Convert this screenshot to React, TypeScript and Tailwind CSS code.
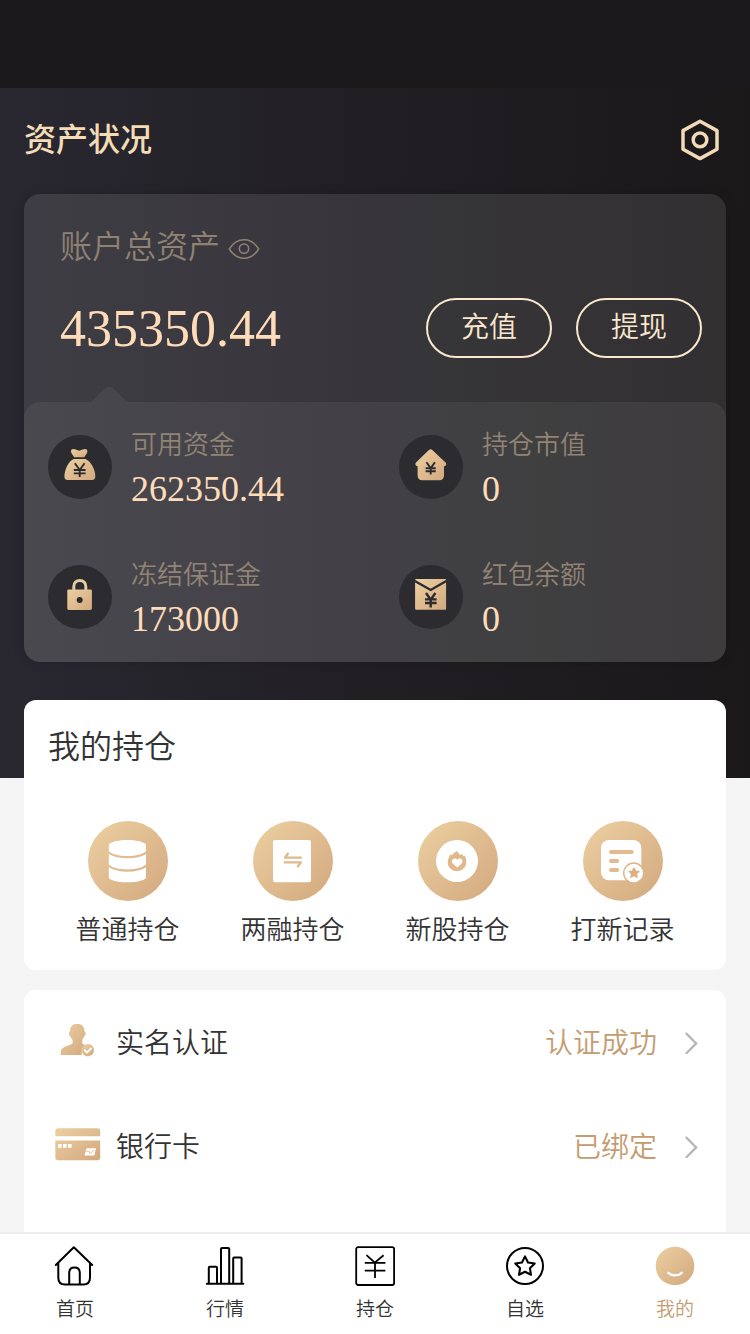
import { useId, type ReactNode } from 'react';

function GoldIcon({ box, className, children }: { box: string; className: string; children: (fill: string) => ReactNode }) {
  const id = useId();
  return (
    <svg viewBox={box} className={className} fill="none" aria-hidden="true">
      <defs>
        <linearGradient id={id} x1="0" y1="0" x2="1" y2="1">
          <stop offset="0" stopColor="#ecd0a2" />
          <stop offset="1" stopColor="#d3a87e" />
        </linearGradient>
      </defs>
      {children(`url(#${id})`)}
    </svg>
  );
}

const BagIcon = () => (
  <GoldIcon box="0 0 64 64" className="size-16">
    {(g) => (
      <>
        <path fill={g} d="M26 22.3C25.4 20.2 23 18.6 23 16.2C23 13.6 26 13.4 28.4 14.8C30.2 15.9 32.2 15.9 34 14.8C36.4 13.4 39.4 13.6 39.4 16.2C39.4 18.6 37 20.2 36.4 22.3Z" />
        <path fill={g} d="M25.5 24H37.5C43 26.5 47.3 34.5 47.3 41.5C47.3 44 46 45 44 45H19.6C17.6 45 16.4 44 16.4 41.5C16.4 34.5 20.5 26.5 25.5 24Z" />
        <path stroke="#2b2b31" strokeWidth="1.9" d="M26.8 28.3L31.7 35L36.6 28.3M31.7 34.4V42M25.8 35H37.6M25.8 38.4H37.6" />
      </>
    )}
  </GoldIcon>
);

const HouseIcon = () => (
  <GoldIcon box="0 0 64 64" className="size-16">
    {(g) => (
      <>
        <path fill={g} d="M29.9 15C31.1 14 32.1 14 33.3 15L46.6 27.4C47.8 28.8 47.4 31 45 31.2V40.5C45 43.5 43.3 45.3 40.3 45.3H23.3C20.3 45.3 18.6 43.5 18.6 40.5V31.2C16.2 31 15.8 28.8 17 27.4Z" />
        <path stroke="#2b2b31" strokeWidth="1.9" d="M27.5 27.3L31.7 33.4L35.9 27.3M31.7 33V39.4M26.6 33.2H36.8M26.6 36.2H36.8" />
      </>
    )}
  </GoldIcon>
);

const LockIcon = () => (
  <GoldIcon box="0 0 64 64" className="size-16">
    {(g) => (
      <>
        <path stroke="#e9cb9f" strokeWidth="3" d="M25.8 26V21.5C25.8 17.8 28.3 15.5 31.8 15.5S37.8 17.8 37.8 21.5V26" />
        <rect x="19.3" y="24.4" width="24.6" height="20.6" rx="1.4" fill={g} />
        <circle cx="31.7" cy="35" r="3" fill="#2b2b31" />
      </>
    )}
  </GoldIcon>
);

const EnvelopeIcon = () => (
  <GoldIcon box="0 0 64 64" className="size-16">
    {(g) => (
      <>
        <rect x="16.1" y="14" width="31" height="30.8" rx="1" fill={g} />
        <path stroke="#2b2b31" strokeWidth="2.3" d="M15.8 16L31.7 25L47.3 16" />
        <path stroke="#2b2b31" strokeWidth="2.4" d="M27 28L31.7 34.6L36.4 28M31.7 33.6V42.6M26 34.4H37.6M26 38H37.6" />
      </>
    )}
  </GoldIcon>
);

const StackIcon = () => (
  <GoldIcon box="0 0 80 80" className="size-20">
    {(g) => (
      <>
        <circle cx="40" cy="40" r="40" fill={g} />
        <g fill="#fff">
          <path d="M20.8 24.5C20.8 21.4 29 19 39.4 19S58 21.4 58 24.5V30C55 33.4 48 35 39.4 35S23.8 33.4 20.8 30Z" />
          <path d="M20.8 33C25.5 36 31.5 37.3 39.4 37.3S53.3 36 58 33V43.5C55 46.6 48 48.4 39.4 48.4S23.8 46.6 20.8 43.5Z" />
          <path d="M20.8 46.3C25.5 49.4 31.5 50.7 39.4 50.7S53.3 49.4 58 46.3V56.5C58 59 49.8 61.3 39.4 61.3S20.8 59 20.8 56.5Z" />
        </g>
      </>
    )}
  </GoldIcon>
);

const SwapIcon = () => (
  <GoldIcon box="0 0 80 80" className="size-20">
    {(g) => (
      <>
        <circle cx="40" cy="40" r="40" fill={g} />
        <rect x="20" y="19" width="38" height="42.2" rx="2" fill="#fff" />
        <path stroke="#dfb98c" strokeWidth="2.4" strokeLinecap="round" strokeLinejoin="round" d="M47.8 36.6H32L34.8 32.8M31.8 41.4H47.8L44.9 45.4" />
      </>
    )}
  </GoldIcon>
);

const FlameIcon = () => (
  <GoldIcon box="0 0 80 80" className="size-20">
    {(g) => (
      <>
        <circle cx="40" cy="40" r="40" fill={g} />
        <circle cx="39" cy="40" r="21" fill="#fff" />
        <path fill="#dfb98c" d="M32.6 33L34.2 34.6C34.8 32 36.8 31.6 39 30C40 31.4 41.2 32.4 42 34.2L43.8 32.8C44.4 33.6 45 34.4 45.6 35.2L46.8 34.6C47.6 36 48.3 38.4 48.3 41C48.3 46.4 44.2 50.2 39 50.2S29.7 46.4 29.7 41C29.7 37.6 31.6 35.6 32.6 33Z" />
        <path fill="#fff" d="M39.2 46.6L34.7 42.4C32.7 40 34.7 37.6 36.8 37.6C38 37.6 38.8 38.2 39.2 39.1C39.6 38.2 40.6 37.6 41.6 37.6C43.8 37.6 45.6 40 43.7 42.4Z" />
      </>
    )}
  </GoldIcon>
);

const RecordIcon = () => (
  <GoldIcon box="0 0 80 80" className="size-20">
    {(g) => (
      <>
        <circle cx="40" cy="40" r="40" fill={g} />
        <rect x="18" y="19" width="40.3" height="40.3" rx="8" fill="#fff" />
        <path stroke="#e0bb8e" strokeWidth="3.8" strokeLinecap="round" d="M28 31H48.8M28 40H34.2M28 49H34.2" />
        <circle cx="50.7" cy="52" r="10" fill="#fff" stroke="#dcb487" strokeWidth="1.4" />
        <path fill="#dbb183" stroke="#dbb183" strokeLinejoin="round" strokeWidth="1.4" d="M51 47L52.5 50.1L55.9 50.5L53.4 52.8L54.1 56.2L51 54.5L47.9 56.2L48.6 52.8L46.1 50.5L49.5 50.1Z" />
      </>
    )}
  </GoldIcon>
);

const PersonIcon = () => (
  <GoldIcon box="0 0 46 36" className="h-9 w-[46px]">
    {(g) => (
      <>
        <path fill={g} d="M22.2 -.1C26.8 -.1 29.6 2.8 29.6 7.8C31 8 30.8 11.4 29.2 12.2C28.6 14 27.6 15.2 27.2 16V19.6L31.4 21.8C27.8 23.6 26 27 26.8 31.1H5.7V28.2C5.7 22.6 12.5 22.4 17.6 19.6V16C16.8 15.2 15.8 14 15.3 12.2C13.7 11.4 13.4 8 14.8 7.8C14.8 2.8 17.6 -.1 22.2 -.1Z" />
        <circle cx="32.8" cy="26.2" r="6.2" fill={g} />
        <path stroke="#fff" strokeWidth="1.9" d="M29.2 25.8L32 28.5L36.6 23.9" />
      </>
    )}
  </GoldIcon>
);

const BankCardIcon = () => (
  <GoldIcon box="0 0 46 36" className="h-9 w-[46px]">
    {(g) => (
      <>
        <path fill={g} d="M3 .2H42.4C44.2 .2 45.2 1.2 45.2 3V29.4C45.2 31.2 44.2 32.2 42.4 32.2H3C1.2 32.2 .3 31.2 .3 29.4V3C.3 1.2 1.2 .2 3 .2Z" />
        <path fill="#fff" d="M0 8.2H46V12.6H0ZM3 16H6.6V19.8H3ZM8 16H11.6V19.8H8ZM13 16H16.6V19.8H13ZM31.6 20.2H41L39.4 27.6H29.4Z" />
        <path stroke="#ddb98d" strokeWidth=".7" d="M31 23.4H34.5V25.2H36.5L37.5 22.7H40" />
      </>
    )}
  </GoldIcon>
);

const line = { fill: 'none', stroke: 'currentColor', strokeWidth: 2, strokeLinejoin: 'round', strokeLinecap: 'round' } as const;

const HomeTab = () => (
  <svg viewBox="0 0 40 40" className="size-10" aria-hidden="true" {...line}>
    <path d="M.8 19L18.8 1.2L37.2 19M3.3 17V31.5C3.3 36.6 5.6 38.6 10 38.6H28.4C33 38.6 35 36.6 35 31.5V17M14.2 38.5V27.2C14.2 23.6 16 21.6 19.5 21.6S24.8 23.6 24.8 27.2V38.5" />
  </svg>
);
const ChartTab = () => (
  <svg viewBox="0 0 40 40" className="size-10" aria-hidden="true" {...line}>
    <path d="M1.8 37.7H38.3M3.8 37V21.8Q3.8 20.8 4.8 20.8H11Q12 20.8 12 21.8V37M16 37V3Q16 2 17 2H23.2Q24.2 2 24.2 3V37M28.2 37V12.5Q28.2 11.5 29.2 11.5H35.6Q36.6 11.5 36.6 12.5V37" />
  </svg>
);
const YenTab = () => (
  <svg viewBox="0 0 40 40" className="size-10" aria-hidden="true" {...line} strokeWidth={1.8} strokeLinecap="butt">
    <rect x="1.2" y="1.1" width="37.9" height="37.9" rx="2" />
    <path d="M11.5 9.2L19.8 16.6L28.6 9.2M9.8 16.8H30.4M9.8 24.6H30.4M20 16.6V32" />
  </svg>
);
const StarTab = () => (
  <svg viewBox="0 0 40 40" className="size-10" aria-hidden="true" {...line}>
    <circle cx="20" cy="20" r="18" />
    <path strokeWidth="2.1" d="M20 10.4L23 16.5L29.7 17.5L24.9 22.2L26 28.8L20 25.7L14 28.8L15.1 22.2L10.3 17.5L17 16.5Z" />
  </svg>
);
const SmileTab = () => (
  <GoldIcon box="0 0 40 40" className="size-10">
    {(g) => (
      <>
        <circle cx="20" cy="20" r="19.3" fill={g} />
        <path stroke="#fff" strokeWidth="2.4" strokeLinecap="round" d="M13.3 26.8C17 30.2 23 30.2 26.8 26.8" />
      </>
    )}
  </GoldIcon>
);

const balances = [
  { label: '可用资金', value: '262350.44', Icon: BagIcon },
  { label: '持仓市值', value: '0', Icon: HouseIcon },
  { label: '冻结保证金', value: '173000', Icon: LockIcon },
  { label: '红包余额', value: '0', Icon: EnvelopeIcon },
];
const holdings = [
  { label: '普通持仓', Icon: StackIcon },
  { label: '两融持仓', Icon: SwapIcon },
  { label: '新股持仓', Icon: FlameIcon },
  { label: '打新记录', Icon: RecordIcon },
];
const settings = [
  { label: '实名认证', status: '认证成功', Icon: PersonIcon },
  { label: '银行卡', status: '已绑定', Icon: BankCardIcon },
];
const tabs = [
  { label: '首页', Icon: HomeTab },
  { label: '行情', Icon: ChartTab },
  { label: '持仓', Icon: YenTab },
  { label: '自选', Icon: StarTab },
  { label: '我的', Icon: SmileTab, active: true },
];

export default function App() {
  return (
    <div className="flex min-h-screen flex-col bg-[#f5f5f5] font-['Liberation_Sans','Noto_Sans_CJK_SC',sans-serif] font-[350] text-[#333333]">
      <div className="h-[88px] bg-[#1b191b]" />

      <section className="bg-linear-to-r from-[#292831] via-[#211f24] to-[#1a1819] px-6 pb-[116px]">
        <header className="flex h-[106px] items-center justify-between pr-1.5">
          <h1 className="pb-0.5 text-[32px] leading-10 font-medium text-[#f3dcb6]">资产状况</h1>
          <button type="button" aria-label="设置" className="text-[#f1dab6]">
            <svg viewBox="0 0 40 44" className="h-11 w-10" fill="none" stroke="currentColor" strokeWidth="3.5" strokeLinejoin="round" aria-hidden="true">
              <path d="M20 2.2L37 11.6V30.2L20 39.6L3 30.2V11.6Z" />
              <circle cx="20" cy="20.9" r="6.8" />
            </svg>
          </button>
        </header>

        <div className="overflow-hidden rounded-2xl bg-white/10 shadow-[0_0_12px_rgba(0,0,0,0.15)]">
          <div className="px-6 pt-8 pl-9">
            <div className="flex items-center gap-2 text-[#8f8273]">
              <h2 className="text-[32px] leading-[42px]">账户总资产</h2>
              <button type="button" aria-label="隐藏金额" className="pt-1">
                <svg viewBox="0 0 32 22" className="h-[22px] w-8" fill="none" stroke="currentColor" strokeWidth="1.5" strokeLinejoin="round" aria-hidden="true">
                  <path d="M1.3 11C5 5 10.4 1.8 16 1.8S27 5 30.7 11C27 17 21.6 20.2 16 20.2S5 17 1.3 11Z" />
                  <circle cx="16" cy="10.6" r="4.7" />
                </svg>
              </button>
            </div>
            <div className="flex items-center justify-between pt-[30px]">
              <p className="pt-0.5 font-['Liberation_Serif',serif] text-[52px] leading-[58px] text-[#fedcba]">435350.44</p>
              <div className="flex gap-6 text-[28px] leading-[54px] text-[#fbe8cf]">
                <button type="button" className="h-[60px] w-[126px] rounded-full border-2 border-[#fbe8cf]">充值</button>
                <button type="button" className="h-[60px] w-[126px] rounded-full border-2 border-[#fbe8cf]">提现</button>
              </div>
            </div>
            <svg viewBox="0 0 36 16" className="mt-7 ml-[31px] h-4 w-9" aria-hidden="true">
              <path fill="#fff" fillOpacity=".06" d="M0 16L12.5 3.5Q18 -1.5 23.5 3.5L36 16Z" />
            </svg>
          </div>

          <dl className="grid grid-cols-2 rounded-2xl bg-white/6">
            {balances.map(({ label, value, Icon }) => (
              <div key={label} className="flex h-[130px] items-center gap-[19px] pl-6">
                <span className="rounded-full bg-[#2b2b30]">
                  <Icon />
                </span>
                <div>
                  <dt className="text-[26px] leading-[46px] text-[#918475]">{label}</dt>
                  <dd className="pb-0.5 font-['Liberation_Serif',serif] text-4xl leading-[42px] text-[#fedcba]">{value}</dd>
                </div>
              </div>
            ))}
          </dl>
        </div>
      </section>

      <main className="-mt-[78px] flex flex-1 flex-col gap-5 px-6">
        <section className="rounded-xl bg-white pb-[18px]">
          <h2 className="px-6 pt-6 text-[32px] leading-[46px]">我的持仓</h2>
          <div className="grid grid-cols-4 px-[21px] pt-[51px]">
            {holdings.map(({ label, Icon }) => (
              <button type="button" key={label} className="flex flex-col items-center gap-2 text-[26px] leading-[43px]">
                <Icon />
                {label}
              </button>
            ))}
          </div>
        </section>

        <section className="flex-1 rounded-t-xl bg-white">
          {settings.map(({ label, status, Icon }) => (
            <a href="#" key={label} className="flex h-[104px] items-center pr-7 pl-[31px] text-[28px] leading-10">
              <Icon />
              <span className="ml-[15px] flex-1 pt-1">{label}</span>
              <span className="mr-[27px] pt-1 text-[#c49c70]">{status}</span>
              <svg viewBox="0 0 14 24" className="h-6 w-3.5" fill="none" stroke="#b5b5b5" strokeWidth="2.2" strokeLinecap="round" aria-hidden="true">
                <path d="M2.4 3.6L12.2 13.4L2.4 23.2" />
              </svg>
            </a>
          ))}
        </section>
      </main>

      <nav className="sticky bottom-0 grid grid-cols-5 border-t-2 border-[#eeeeee] bg-white pt-3 pb-2">
        {tabs.map(({ label, Icon, active }) => (
          <a
            href="#"
            key={label}
            aria-current={active ? 'page' : undefined}
            className="group flex flex-col items-center gap-2 text-[19px] leading-8 text-black aria-[current=page]:text-[#c49c70]"
          >
            <Icon />
            <span className="text-[#333333] group-aria-[current=page]:text-[#c49c70]">{label}</span>
          </a>
        ))}
      </nav>
    </div>
  );
}
